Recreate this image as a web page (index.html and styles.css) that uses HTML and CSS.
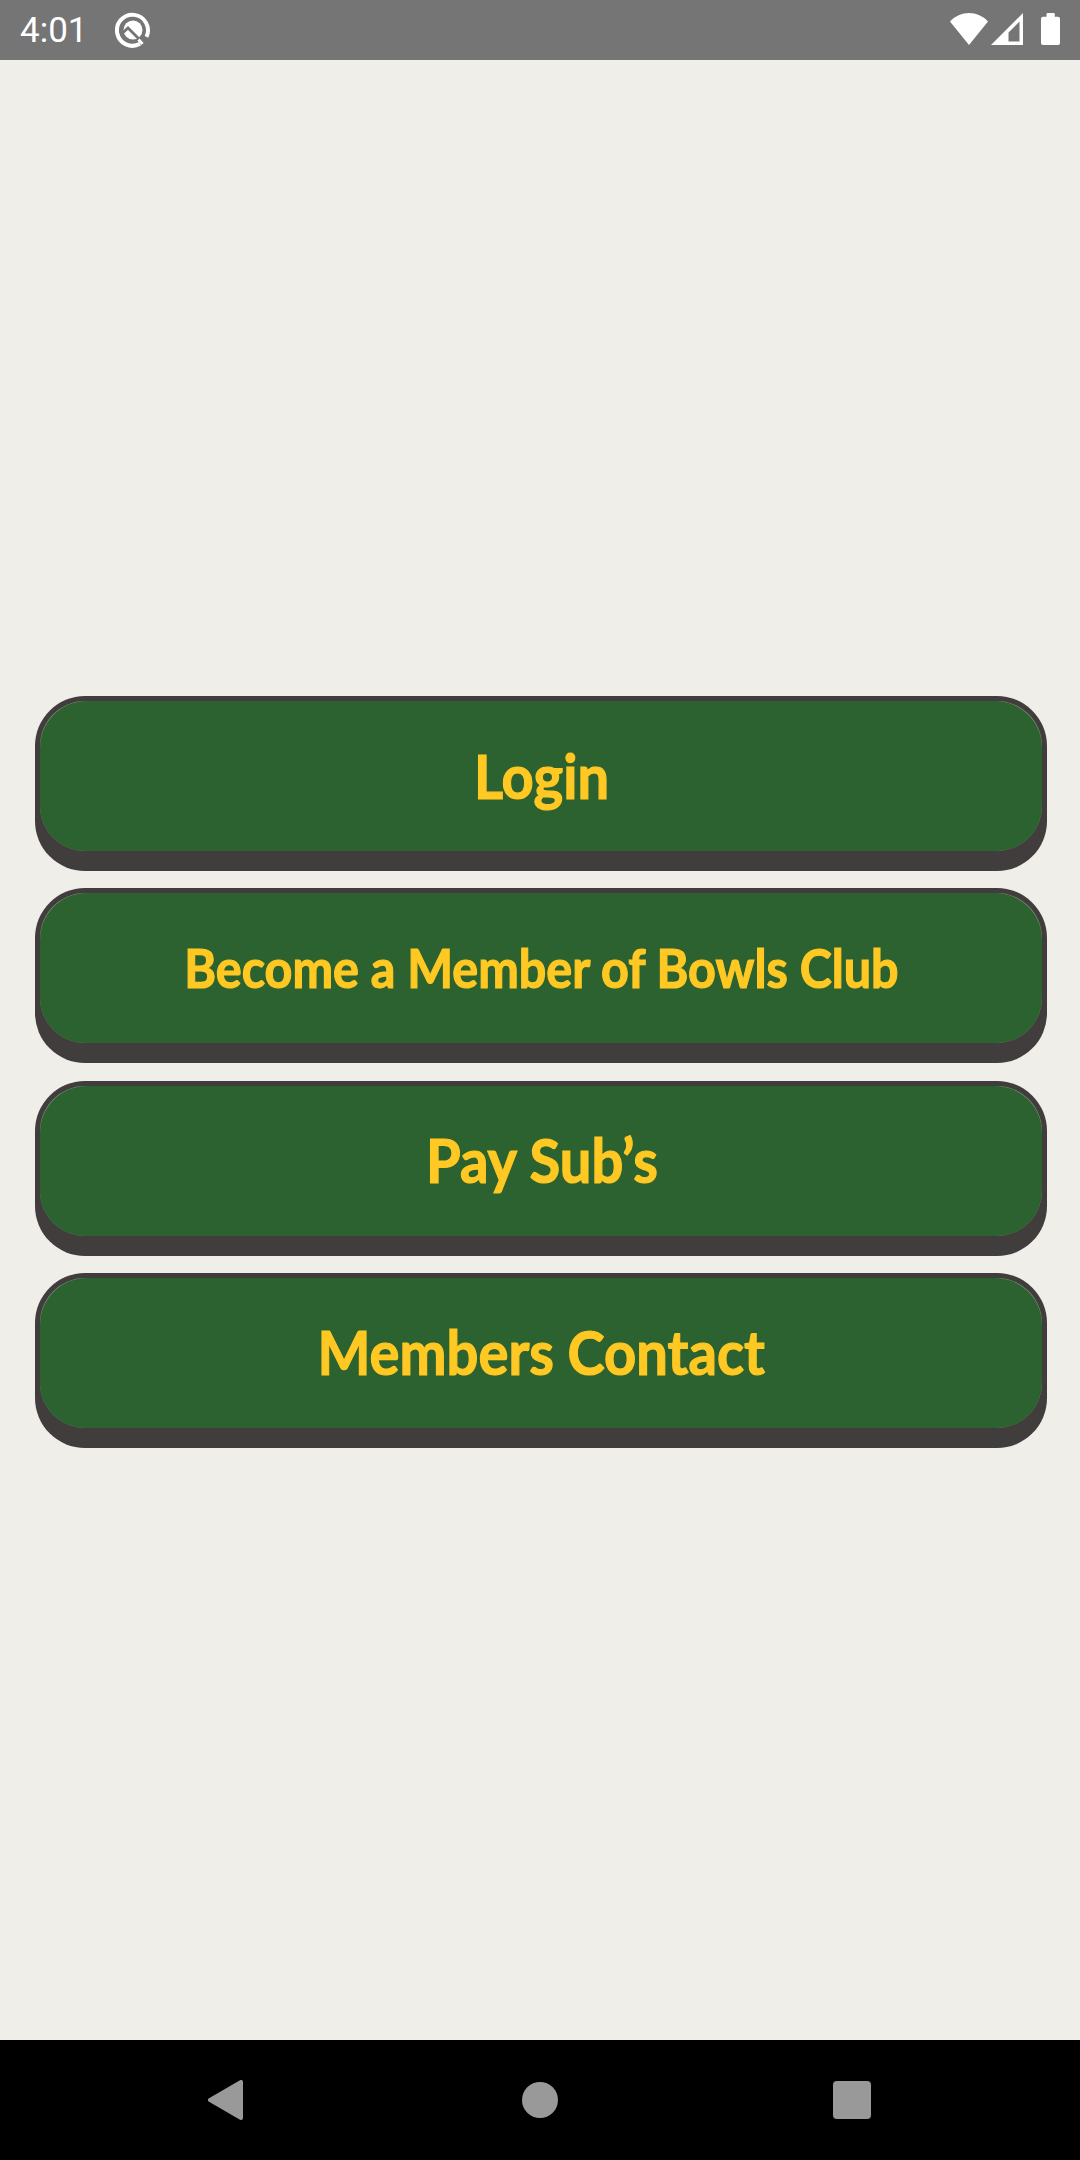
FILE: index.html
```html
<!DOCTYPE html>
<html lang="en">
<head>
    <meta charset="UTF-8">
    <meta name="viewport" content="width=device-width, initial-scale=1.0">
    <title>Bowls Club</title>
    <link rel="stylesheet" href="styles.css">
</head>
<body>
    <header class="status-bar">
        <span class="clock">4:01</span>
        <svg class="q-icon" width="36" height="36" viewBox="0 0 36 36">
            <path d="M31.5 24.8A15.5 15.5 0 1 0 25 31.8" fill="none" stroke="#fff" stroke-width="4"/>
            <circle cx="18" cy="18" r="9.5" fill="#fff"/>
            <path d="M7 21.5l6-5.5L27 30" fill="none" stroke="#757575" stroke-width="2.8"/>
            <path d="M23.5 27.5l4 4.5" stroke="#fff" stroke-width="3"/>
        </svg>
        <div class="status-icons">
            <svg width="38" height="32" viewBox="0 0 38 32">
                <path d="M0 8.5C5 3 12 0 19 0s14 3 19 8.5L19 32z" fill="#fff"/>
            </svg>
            <svg class="signal" width="32" height="32" viewBox="0 0 32 32">
                <path d="M32 0v32H0zM28.5 8.5L17.5 19.5V28.5h11z" fill="#fff" fill-rule="evenodd"/>
            </svg>
            <svg class="battery" width="19" height="32" viewBox="0 0 19 32">
                <path d="M5.5 1q0-1 1-1h6.3q1 0 1 1v2.7H17q2 0 2 2V30q0 2-2 2H2q-2 0-2-2V5.7q0-2 2-2h3.5z" fill="#fff"/>
            </svg>
        </div>
    </header>

    <main class="menu">
        <button class="menu-button"><span class="face"><span class="fill"><span class="label">Login</span></span></span></button>
        <button class="menu-button"><span class="face"><span class="fill"><span class="label small">Become a Member of Bowls Club</span></span></span></button>
        <button class="menu-button"><span class="face"><span class="fill"><span class="label">Pay Sub’s</span></span></span></button>
        <button class="menu-button"><span class="face"><span class="fill"><span class="label">Members Contact</span></span></span></button>
    </main>

    <nav class="nav-bar">
        <svg width="36" height="40" viewBox="0 0 36 40">
            <path d="M2 20L33 2v36z" fill="#999" stroke="#999" stroke-width="4" stroke-linejoin="round"/>
        </svg>
        <span class="home"></span>
        <span class="recent"></span>
    </nav>
</body>
</html>
```
FILE: styles.css
```css
* {
    margin: 0;
    padding: 0;
    box-sizing: border-box;
}

body {
    height: 2160px;
    display: flex;
    flex-direction: column;
    background-color: #efeee9;
    font-family: Lato, "Liberation Sans", sans-serif;
    overflow: hidden;
}

.status-bar {
    display: flex;
    align-items: center;
    height: 60px;
    padding: 0 20px;
    background-color: #757575;
}

.clock {
    width: 95px;
    padding-top: 2px;
    font-family: Roboto, sans-serif;
    font-size: 35px;
    line-height: 58px;
    color: #fff;
}

.status-icons {
    display: flex;
    align-items: center;
    margin-left: auto;
    padding-bottom: 2px;
}

.signal {
    margin-left: 3px;
}

.battery {
    margin-left: 18px;
}

.menu {
    flex: 1;
    display: flex;
    flex-direction: column;
    gap: 17.3px;
    padding: 636px 33px 0 35px;
}

.menu-button {
    display: flex;
    height: 175px;
    padding: 5px 5px 20px;
    border: none;
    border-radius: 50px;
    background-color: #413d3d;
    cursor: pointer;
}

/* slightly lighter edge shows through at the top corners */
.face {
    flex: 1;
    display: flex;
    height: 150px;
    border-radius: 45px;
    background-color: #7d8b76;
}

.fill {
    flex: 1;
    display: flex;
    align-items: center;
    justify-content: center;
    padding: 0 0 2px 1px;
    border-radius: 47px 47px 45px 45px;
    background-color: #2c6130;
}

.label {
    color: #ffc823;
    font-family: Lato, "Liberation Sans", sans-serif;
    font-size: 61px;
    font-weight: 700;
    white-space: nowrap;
    -webkit-text-stroke: 1.2px #ffc823;
    transform: scaleX(0.92);
}

.small {
    font-size: 53px;
    transform: scaleX(0.915);
}

.nav-bar {
    display: flex;
    align-items: center;
    justify-content: space-between;
    height: 120px;
    padding: 0 209px 0 208px;
    background-color: #000;
}

.home {
    width: 36px;
    height: 36px;
    margin-left: 2px;
    border-radius: 50%;
    background-color: #999;
}

.recent {
    width: 38px;
    height: 38px;
    border-radius: 4px;
    background-color: #999;
}
```
